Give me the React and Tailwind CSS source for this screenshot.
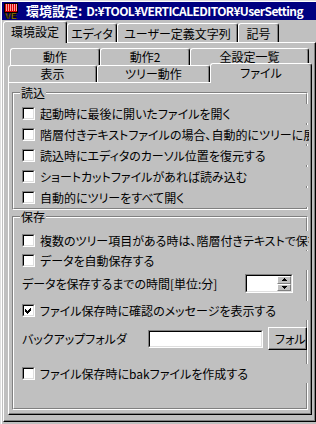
import React from "react";

const FONT =
  "font-['Noto_Sans_CJK_JP','Noto_Sans_CJK_SC',sans-serif] [font-feature-settings:'palt']";

function AppIcon() {
  return (
    <svg width="16" height="16" viewBox="0 0 16 16" shapeRendering="crispEdges">
      <rect x="1" y="0" width="14" height="10" fill="#000" />
      <rect x="2" y="1" width="12" height="8" fill="#d40000" />
      {[3, 5, 7, 9, 11, 13].map((x) => (
        <rect key={x} x={x} y="1" width="1" height="7" fill="#ff9c9c" />
      ))}
      <text
        x="8"
        y="15.5"
        textAnchor="middle"
        fontSize="9"
        fontWeight="bold"
        fill="#ffd800"
        stroke="#000"
        strokeWidth="0.7"
        fontFamily="'Liberation Sans', sans-serif"
      >
        VE
      </text>
    </svg>
  );
}

function Tab({ label, selected, className = "" }) {
  return (
    <div
      className={`relative flex shrink-0 items-center justify-center whitespace-nowrap rounded-t-[3px] border-l border-r border-t border-l-white border-r-black border-t-white bg-[#c0c0c0] shadow-[inset_-1px_0_0_#808080] ${
        selected ? "z-10 -mb-px" : ""
      } ${className}`}
    >
      {label}
    </div>
  );
}

function CheckBox({ checked }) {
  return (
    <span className="block h-[13px] w-[13px] shrink-0 border border-b-white border-l-[#808080] border-r-white border-t-[#808080] bg-white">
      <span className="block h-full w-full border border-b-[#dfdfdf] border-l-black border-r-[#dfdfdf] border-t-black">
        {checked && (
          <svg width="9" height="9" viewBox="0 0 9 9" shapeRendering="crispEdges">
            <path d="M1 3 L3 5 L7 1 L7 4 L3 8 L1 6 Z" fill="#000" />
          </svg>
        )}
      </span>
    </span>
  );
}

function CheckRow({ label, checked, className = "" }) {
  return (
    <div
      className={`-mr-[3px] flex h-[19px] items-center overflow-hidden whitespace-nowrap bg-[#c0c0c0] pl-[8px] ${className}`}
    >
      <CheckBox checked={checked} />
      <span className="ml-[5px] leading-[14px]">{label}</span>
    </div>
  );
}

function Group({ label, className = "", children }) {
  return (
    <div
      className={`relative border border-b-white border-l-[#808080] border-r-white border-t-[#808080] ${className}`}
    >
      <div className="flex h-full flex-col border border-b-[#808080] border-l-white border-r-[#808080] border-t-white">
        {children}
      </div>
      <span className="absolute left-[7px] top-[-7px] bg-[#c0c0c0] px-[1px] leading-[14px]">
        {label}
      </span>
    </div>
  );
}

function Sunken({ className = "", children }) {
  return (
    <div
      className={`shrink-0 border border-b-white border-l-[#808080] border-r-white border-t-[#808080] ${className}`}
    >
      <div className="flex h-full w-full border border-b-[#dfdfdf] border-l-black border-r-[#dfdfdf] border-t-black bg-white">
        {children}
      </div>
    </div>
  );
}

function SpinButton({ up }) {
  return (
    <div className="flex flex-1 items-center justify-center border border-b-[#808080] border-l-white border-r-[#808080] border-t-white bg-[#c0c0c0]">
      <svg width="5" height="3" viewBox="0 0 5 3" shapeRendering="crispEdges">
        <path d={up ? "M2 0 H3 V1 H4 V2 H5 V3 H0 V2 H1 V1 H2 Z" : "M0 0 H5 V1 H4 V2 H3 V3 H2 V2 H1 V1 H0 Z"} fill="#000" />
      </svg>
    </div>
  );
}

export default function App() {
  return (
    <div
      className={`h-[424px] w-[316px] overflow-hidden border-l border-t border-[#dfdfdf] bg-[#c0c0c0] text-[12px] text-black ${FONT}`}
    >
      <div className="h-full border-l border-t border-white">
        {/* title bar */}
        <div className="flex h-[18px] items-center overflow-hidden whitespace-nowrap bg-[#000080] font-bold leading-[16px] text-white">
          <div className="ml-[1px] shrink-0">
            <AppIcon />
          </div>
          <span className="ml-[7px] text-[13px]">環境設定:</span>
          <span className="ml-[4px] text-[12px] tracking-[-0.6px]">
            D:¥TOOL¥VERTICALEDITOR¥UserSetting
          </span>
        </div>

        {/* outer tabs */}
        <div className="ml-[1px] flex h-[22px] items-end">
          <Tab label="環境設定" selected className="h-[22px] w-[64px] pb-[1px]" />
          <Tab label="エディタ" className="h-[19px] w-[50px] pt-[1px]" />
          <Tab label="ユーザー定義文字列" className="h-[19px] w-[121px] pt-[1px]" />
          <Tab label="記号" className="h-[19px] w-[41px] pt-[1px]" />
        </div>

        {/* outer panel */}
        <div className="ml-[1px] h-[380px] w-[313px] border border-b-black border-l-white border-r-black border-t-white pl-[4px] pt-[5px] shadow-[inset_-1px_-1px_0_#808080]">
          <div className="ml-[2px] flex h-[17px]">
            <Tab label="動作" className="h-[17px] w-[90px]" />
            <Tab label="動作2" className="h-[17px] w-[90px]" />
            <Tab label="全設定一覧" className="h-[17px] w-[119px]" />
          </div>
          <div className="flex h-[17px] items-end">
            <Tab label="表示" className="h-[17px] w-[89px]" />
            <Tab label="ツリー動作" className="h-[17px] w-[113px]" />
            <Tab label="ファイル" selected className="h-[20px] w-[102px] pb-[1px]" />
          </div>

          {/* inner panel */}
          <div className="h-[333px] w-[304px] border border-b-black border-l-white border-r-black border-t-white px-[3px] pt-[9px] shadow-[inset_-1px_-1px_0_#808080]">
            <Group label="読込" className="h-[118px] w-[296px]">
              <div className="flex flex-col gap-[2px] pt-[10px]">
                <CheckRow label="起動時に最後に開いたファイルを開く" />
                <CheckRow label="階層付きテキストファイルの場合、自動的にツリーに展開する" />
                <CheckRow label="読込時にエディタのカーソル位置を復元する" />
                <CheckRow label="ショートカットファイルがあれば読み込む" />
                <CheckRow label="自動的にツリーをすべて開く" />
              </div>
            </Group>

            <Group label="保存" className="mt-[6px] h-[194px] w-[296px]">
              <div className="flex flex-col pt-[13px]">
                <CheckRow label="複数のツリー項目がある時は、階層付きテキストで保存する" />
                <CheckRow label="データを自動保存する" className="mt-[1px]" />

                <div className="mt-[3px] flex h-[21px] items-center pl-[8px]">
                  <span className="w-[223px] leading-[14px]">データを保存するまでの時間[単位:分]</span>
                  <Sunken className="h-[19px] w-[48px]">
                    <div className="flex-1" />
                    <div className="flex w-[14px] flex-col">
                      <SpinButton up />
                      <SpinButton />
                    </div>
                  </Sunken>
                </div>

                <CheckRow
                  checked
                  label="ファイル保存時に確認のメッセージを表示する"
                  className="mt-[7px]"
                />

                <div className="-mr-[3px] mt-[7px] flex h-[23px] items-center pl-[8px]">
                  <span className="w-[126px] leading-[14px]">バックアップフォルダ</span>
                  <Sunken className="h-[18px] w-[115px]" />
                  <div className="ml-[5px] flex h-[23px] w-[39px] items-center overflow-hidden whitespace-nowrap border border-b-black border-l-white border-r-black border-t-white bg-[#c0c0c0] pl-[6px] shadow-[inset_-1px_-1px_0_#808080]">
                    フォル
                  </div>
                </div>

                <CheckRow
                  label="ファイル保存時にbakファイルを作成する"
                  className="mt-[14px]"
                />
              </div>
            </Group>
          </div>
        </div>
      </div>
    </div>
  );
}
